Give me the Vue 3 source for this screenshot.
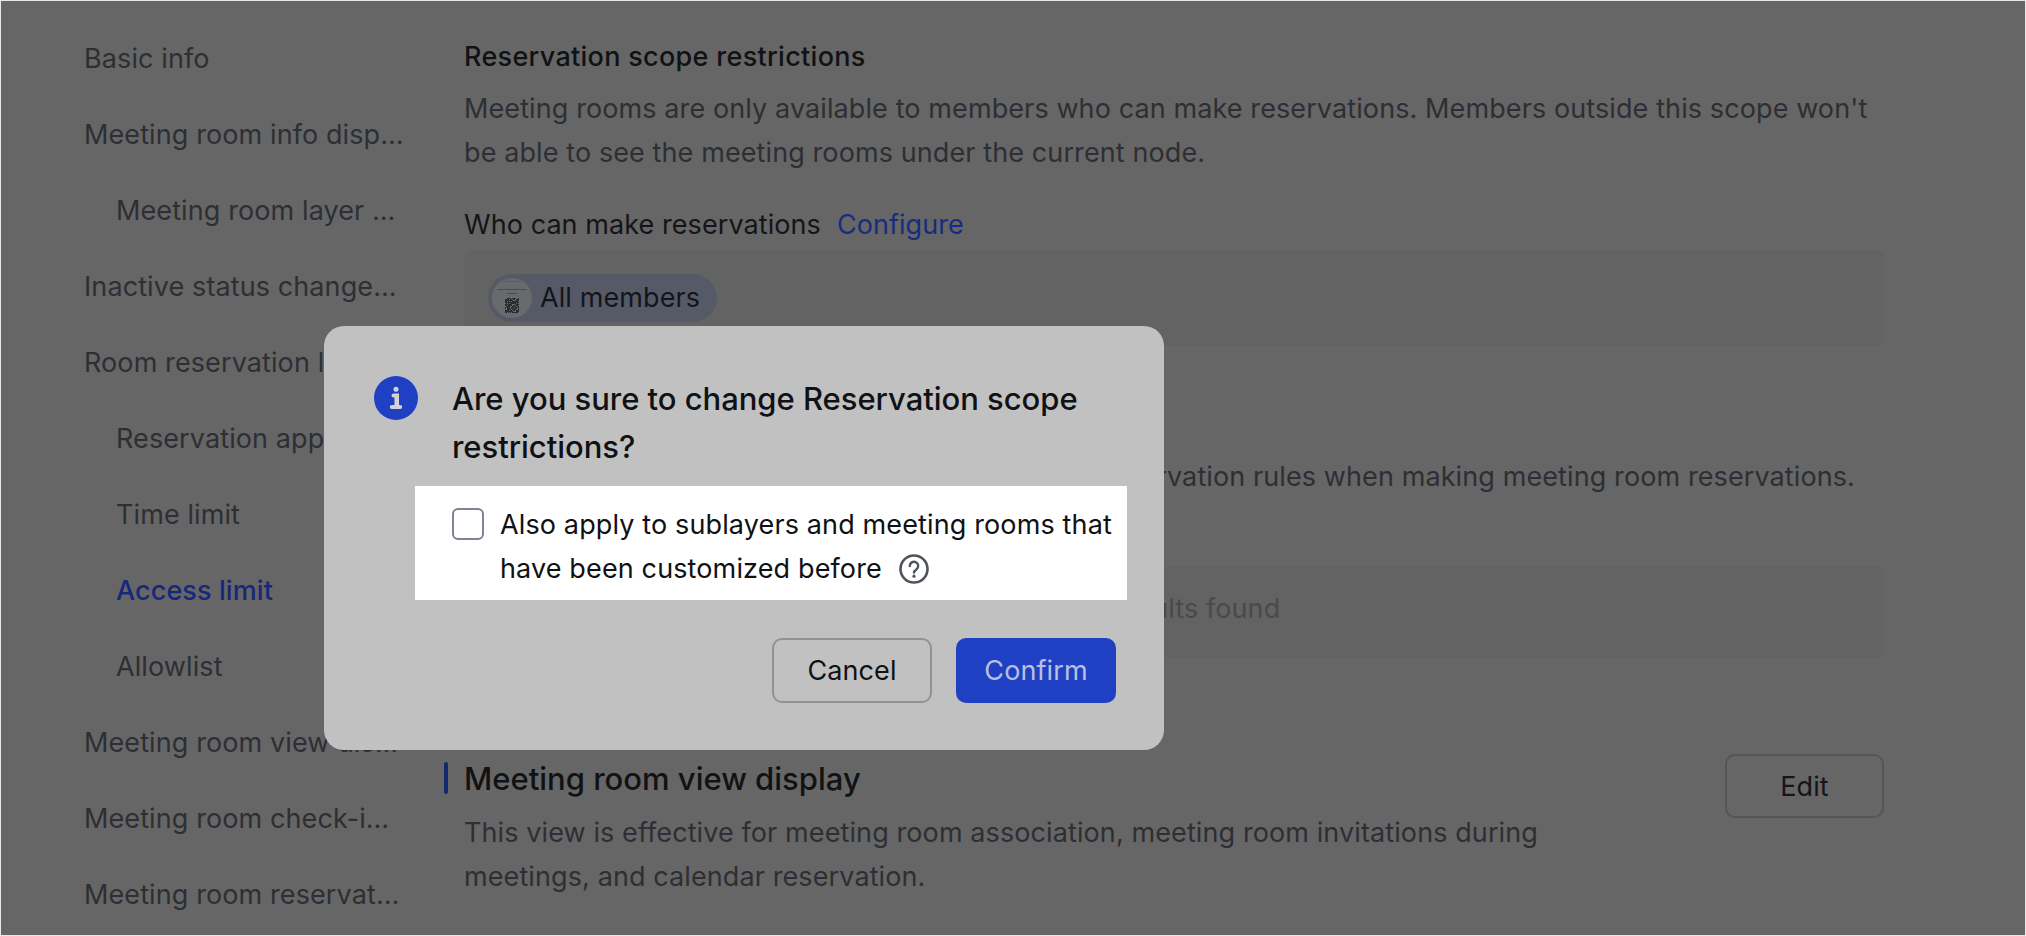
<script setup>
const nav = [
  { t: 'Basic info' },
  { t: 'Meeting room info display' },
  { t: 'Meeting room layer settings', sub: true },
  { t: 'Inactive status change notifications' },
  { t: 'Room reservation limit' },
  { t: 'Reservation approval', sub: true },
  { t: 'Time limit', sub: true },
  { t: 'Access limit', sub: true, active: true },
  { t: 'Allowlist', sub: true },
  { t: 'Meeting room view display' },
  { t: 'Meeting room check-in settings' },
  { t: 'Meeting room reservation settings' }
]
const qr = []
for (let r = 0; r < 15; r++) {
  for (let c = 0; c < 14; c++) {
    if (((r * 7 + c * 13 + r * c * 5) % 11) < 3) qr.push({ x: 13 + c, y: 20 + r })
  }
}
</script>

<template>
  <div class="page">
    <div class="layout">
      <nav class="side">
        <div
          v-for="n in nav"
          :key="n.t"
          class="nav-item"
          :class="{ sub: n.sub, active: n.active }"
        >
          <span class="nav-text">{{ n.t }}</span>
        </div>
      </nav>
      <main class="main">
        <h3 class="h3">Reservation scope restrictions</h3>
        <p class="desc">Meeting rooms are only available to members who can make reservations. Members outside this scope won't be able to see the meeting rooms under the current node.</p>
        <div class="who">
          <span>Who can make reservations</span>
          <span class="link">Configure</span>
        </div>
        <div class="box chips">
          <span class="chip">
            <svg class="avatar" viewBox="0 0 40 40" width="40" height="40">
              <circle cx="20" cy="20" r="20" fill="#686a6e" />
              <rect x="10" y="3" width="20" height="1" fill="#5c5e62" />
              <rect x="5" y="11" width="30" height="1" fill="#4a4c50" />
              <rect x="15" y="15" width="10" height="1" fill="#4a4c50" />
              <rect x="13" y="20" width="14" height="15" fill="#2a2c30" />
              <rect v-for="(q, i) in qr" :key="i" :x="q.x" :y="q.y" width="1" height="1" fill="#686a6e" />
            </svg>
            All members
          </span>
        </div>
        <p class="desc rules">Members in this scope must follow the reservation rules when making meeting room reservations.</p>
        <div class="box empty">No results found</div>
        <div class="section">
          <div class="section-body">
            <h2 class="h2">Meeting room view display</h2>
            <p class="desc narrow">This view is effective for meeting room association, meeting room invitations during meetings, and calendar reservation.</p>
          </div>
          <button class="edit">Edit</button>
        </div>
      </main>
    </div>

    <div class="dialog">
      <svg class="info" viewBox="0 0 44 44" width="44" height="44">
        <circle cx="22" cy="22" r="22" fill="#2040c4" />
        <circle cx="22" cy="13.3" r="2.5" fill="#d4d4d4" />
        <path d="M19.5 17.5h5.5v11.5h1.2a2 2 0 0 1 0 4h-8.4a2 2 0 0 1 0-4h2.7v-7.5h-1a2 2 0 0 1 0-4z" fill="#d4d4d4" />
      </svg>
      <div class="dialog-body">
        <div class="title">Are you sure to change Reservation scope restrictions?</div>
        <div class="highlight">
          <span class="check"></span>
          <div class="check-text">
            Also apply to sublayers and meeting rooms that have been customized before
            <svg class="help" viewBox="0 0 30 30" width="30" height="30">
              <circle cx="15" cy="15" r="13.5" fill="none" stroke="#4f535c" stroke-width="2.6" />
              <path d="M10.8 12a4.2 4.2 0 1 1 6.6 3.4c-1.5 1-2.4 1.7-2.4 3.2" fill="none" stroke="#4f535c" stroke-width="2.4" stroke-linecap="round" />
              <circle cx="15" cy="22.2" r="1.6" fill="#4f535c" />
            </svg>
          </div>
        </div>
        <div class="actions">
          <button class="btn cancel">Cancel</button>
          <button class="btn confirm">Confirm</button>
        </div>
      </div>
    </div>
  </div>
</template>

<style>
html, body { margin: 0; background: #e8e8e8; }
</style>

<style scoped>
.page {
  position: relative;
  margin: 1px;
  height: 934px;
  background: #666;
  overflow: hidden;
  font-family: Inter, "Liberation Sans", sans-serif;
  font-size: 27px;
  letter-spacing: 0.1px;
  line-height: 44px;
  color: #2d2f34;
}
.layout {
  display: grid;
  grid-template-columns: 463px 1420px;
  height: 100%;
}
.side { padding-top: 20px; }
.nav-item {
  height: 76px;
  padding-left: 83px;
  display: flex;
  align-items: center;
}
.nav-item.sub { padding-left: 115px; }
.nav-text {
  display: block;
  width: 320px;
  white-space: nowrap;
  overflow: hidden;
  text-overflow: ellipsis;
}
.nav-item.sub .nav-text { width: 286px; }
.nav-item.active { color: #16287a; font-weight: 500; }
.main { padding-top: 34px; }
.h3 { margin: 0; padding-bottom: 1px; font-size: 27px; letter-spacing: 0.3px; line-height: 44px; font-weight: 500; color: #111214; }
.desc { margin: 7px 0 0; }
.who {
  display: flex;
  gap: 16px;
  margin-top: 28px;
  color: #141518;
  letter-spacing: 0.07px;
}
.link { color: #182c80; }
.box { border-radius: 8px; background: #636363; }
.chips {
  margin-top: 3px;
  height: 96px;
  box-sizing: border-box;
  padding: 24px;
}
.chip {
  display: inline-flex;
  align-items: center;
  gap: 8px;
  height: 48px;
  width: 229px;
  box-sizing: border-box;
  padding: 0 4px;
  border-radius: 24px;
  background: #555a66;
  color: #14151a;
}
.rules {
  margin-top: 109px;
  width: 1391px;
  text-align: right;
  white-space: nowrap;
}
.empty {
  margin-top: 67px;
  height: 92px;
  display: flex;
  align-items: center;
  justify-content: center;
  color: #484a4e;
  padding-bottom: 6px;
  box-sizing: border-box;
}
.section {
  position: relative;
  margin-top: 96px;
  display: flex;
  justify-content: space-between;
  align-items: flex-start;
}
.section::before {
  content: "";
  position: absolute;
  left: -20px;
  top: 8px;
  width: 4px;
  height: 32px;
  border-radius: 2px;
  background: #13286e;
}
.h2 { margin: 0; font-size: 31px; letter-spacing: 0; line-height: 50px; font-weight: 500; color: #111214; }
.narrow { width: 1100px; margin-top: 7px; }
.edit {
  width: 159px;
  height: 64px;
  border: 2px solid #555;
  border-radius: 10px;
  background: transparent;
  font: inherit;
  letter-spacing: inherit;
  color: #141518;
  padding: 2px 0 0;
}
.dialog {
  position: absolute;
  left: 323px;
  top: 325px;
  width: 840px;
  height: 424px;
  box-sizing: border-box;
  border-radius: 20px;
  background: #c1c1c1;
  display: flex;
  padding: 50px 0 0 50px;
  gap: 34px;
  color: #101114;
}
.info { flex: none; }
.dialog-body { width: 640px; }
.title {
  font-size: 31px;
  letter-spacing: -0.03px;
  line-height: 48px;
  font-weight: 500;
  width: 640px;
  margin-top: -1px;
}
.highlight {
  margin: 15px 0 0 -37px;
  width: 712px;
  height: 114px;
  box-sizing: border-box;
  background: #fff;
  padding: 17px 0 0 37px;
  display: flex;
  gap: 16px;
}
.check {
  flex: none;
  width: 32px;
  height: 32px;
  margin-top: 5px;
  border: 2px solid #7e8494;
  border-radius: 6px;
  box-sizing: border-box;
}
.check-text { width: 640px; letter-spacing: 0.13px; line-height: 44px; }
.help { vertical-align: -6px; margin-left: 9px; }
.actions {
  display: flex;
  justify-content: flex-end;
  gap: 24px;
  margin-top: 38px;
  width: 664px;
}
.btn {
  width: 160px;
  height: 65px;
  border-radius: 10px;
  font: inherit;
  letter-spacing: inherit;
  box-sizing: border-box;
}
.cancel { background: transparent; border: 2px solid #929296; color: #101114; }
.confirm { background: #2040c4; border: none; color: #b8c0de; }
</style>
